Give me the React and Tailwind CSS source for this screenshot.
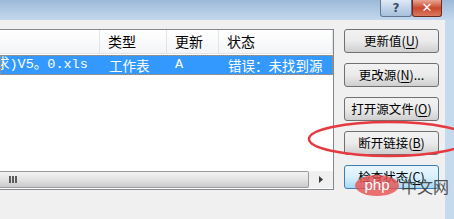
const cjk = { fontFamily: '"Noto Sans CJK SC", "Noto Sans", sans-serif' };
const mono = { fontFamily: '"Liberation Mono", "Noto Sans CJK SC", monospace' };

function Btn({ label, hot, active }) {
  return (
    <div
      className={`h-[24px] w-[95px] flex items-center justify-center rounded-[3px] border text-[12.5px] text-black ${
        active
          ? 'border-[#3c7fb1] bg-gradient-to-b from-[#eaf6fd] via-[#d9f0fc] to-[#a7d9f5]'
          : 'border-[#707070] bg-gradient-to-b from-[#f2f2f2] via-[#ebebeb] to-[#cfcfcf]'
      }`}
      style={cjk}
    >
      <span>{label}</span>
      <span>(</span>
      <span className="underline underline-offset-2">{hot}</span>
      <span>)</span>
    </div>
  );
}

export default function App() {
  const cols = [
    { w: 'w-[100px]', head: '', cell: '求)V5。0.xls', font: mono, pad: 'pl-0' },
    { w: 'w-[67px]', head: '类型', cell: '工作表', font: cjk, pad: 'pl-[8px]' },
    { w: 'w-[52px]', head: '更新', cell: 'A', font: mono, pad: 'pl-[7px]' },
    { w: 'flex-1', head: '状态', cell: '错误：未找到源', font: cjk, pad: 'pl-[8px]' },
  ];

  return (
    <div className="w-[454px] h-[219px] overflow-hidden relative bg-[#c6daee] flex flex-col">
      {/* title bar */}
      <div className="h-[20px] shrink-0 bg-gradient-to-b from-[#9cb9d8] to-[#c4d8ed] flex justify-end items-start pr-[12px]">
        <div className="w-[32px] h-[17px] rounded-b-[3px] border border-t-0 border-[#5f7894] bg-gradient-to-b from-[#dfe9f5] via-[#c1d3e8] to-[#a7c0dc] flex items-center justify-center text-[#3d4f66] font-bold text-[12px]" style={{ fontFamily: '"DejaVu Sans", sans-serif' }}>
          ?
        </div>
        <div className="w-[30px] h-[17px] rounded-b-[3px] border border-t-0 border-[#6b2a1e] bg-gradient-to-b from-[#e8a493] via-[#c9462c] to-[#d97a5e] flex items-center justify-center text-white font-bold text-[13px]" style={{ fontFamily: '"DejaVu Sans", sans-serif' }}>
          ✕
        </div>
      </div>

      {/* body */}
      <div className="flex-1 flex w-[445px] bg-[#f0f0f0] pt-[9px]">
        {/* list view */}
        <div className="w-[334px] h-[161px] border-t border-r border-b border-[#828790] bg-white flex flex-col">
          <div className="h-[24px] flex bg-gradient-to-b from-white to-[#f4f5f7] border-b border-[#e5e5e5]">
            {cols.map((c, i) => (
              <div key={i} className={`${c.w} pl-[8px] flex items-center text-[14px] text-black border-r border-[#e3e4e6]`} style={cjk}>
                {c.head}
              </div>
            ))}
          </div>
          <div className="h-[20px] mt-[1px] flex bg-[#3399ff] border border-dotted border-[#e08a2c]">
            {cols.map((c, i) => (
              <div key={i} className={`${c.w} ${c.pad} flex items-center text-[13.5px] text-white whitespace-nowrap overflow-hidden`} style={c.font}>
                <span className={i === 0 ? '-ml-[5px]' : ''}>{c.cell}</span>
              </div>
            ))}
          </div>
          <div className="flex-1" />
          {/* horizontal scrollbar */}
          <div className="h-[17px] flex items-stretch bg-[#f0f0f0] mb-[1px]">
            <div className="w-[309px] rounded-r-[2px] border-t border-b border-r border-[#9a9a9a] bg-gradient-to-b from-[#f2f2f2] via-[#e3e3e3] to-[#cacaca] flex items-center pl-[9px]">
              <div className="flex gap-[1px]">
                <div className="w-[2px] h-[7px] bg-[#5c5c5c]" />
                <div className="w-[2px] h-[7px] bg-[#5c5c5c]" />
                <div className="w-[2px] h-[7px] bg-[#5c5c5c]" />
              </div>
            </div>
            <div className="flex-1 flex items-center justify-center">
              <svg width="5" height="7" viewBox="0 0 5 7">
                <path d="M0 0 L4 3.5 L0 7 Z" fill="#3a3a3a" />
              </svg>
            </div>
          </div>
        </div>

        {/* buttons */}
        <div className="ml-[10px] flex flex-col gap-[10px]">
          <Btn label="更新值" hot="U" />
          <div className="h-[24px] w-[95px] flex items-center justify-center rounded-[3px] border border-[#707070] bg-gradient-to-b from-[#f2f2f2] via-[#ebebeb] to-[#cfcfcf] text-[12.5px] text-black" style={cjk}>
            <span>更改源(</span>
            <span className="underline underline-offset-2">N</span>
            <span>)...</span>
          </div>
          <Btn label="打开源文件" hot="O" />
          <Btn label="断开链接" hot="B" />
          <Btn label="检查状态" hot="C" active />
        </div>
      </div>

      {/* red annotation ellipse */}
      <svg className="absolute left-0 top-0 pointer-events-none" width="454" height="219">
        <ellipse cx="389" cy="139" rx="80" ry="17" fill="none" stroke="#e53a3f" strokeWidth="2.5" />
      </svg>

      {/* watermark */}
      <div className="absolute left-[355px] top-[175px] flex items-center pointer-events-none">
        <div className="w-[44px] h-[21px] rounded-[50%] bg-[#e9504f]/80 flex items-center justify-center text-white text-[15px] leading-none pb-[2px]" style={{ fontFamily: '"Liberation Sans", sans-serif' }}>
          php
        </div>
        <div className="ml-[2px] text-[16px] leading-none text-[#3b3b3b]/90" style={cjk}>
          中文网
        </div>
      </div>
    </div>
  );
}
